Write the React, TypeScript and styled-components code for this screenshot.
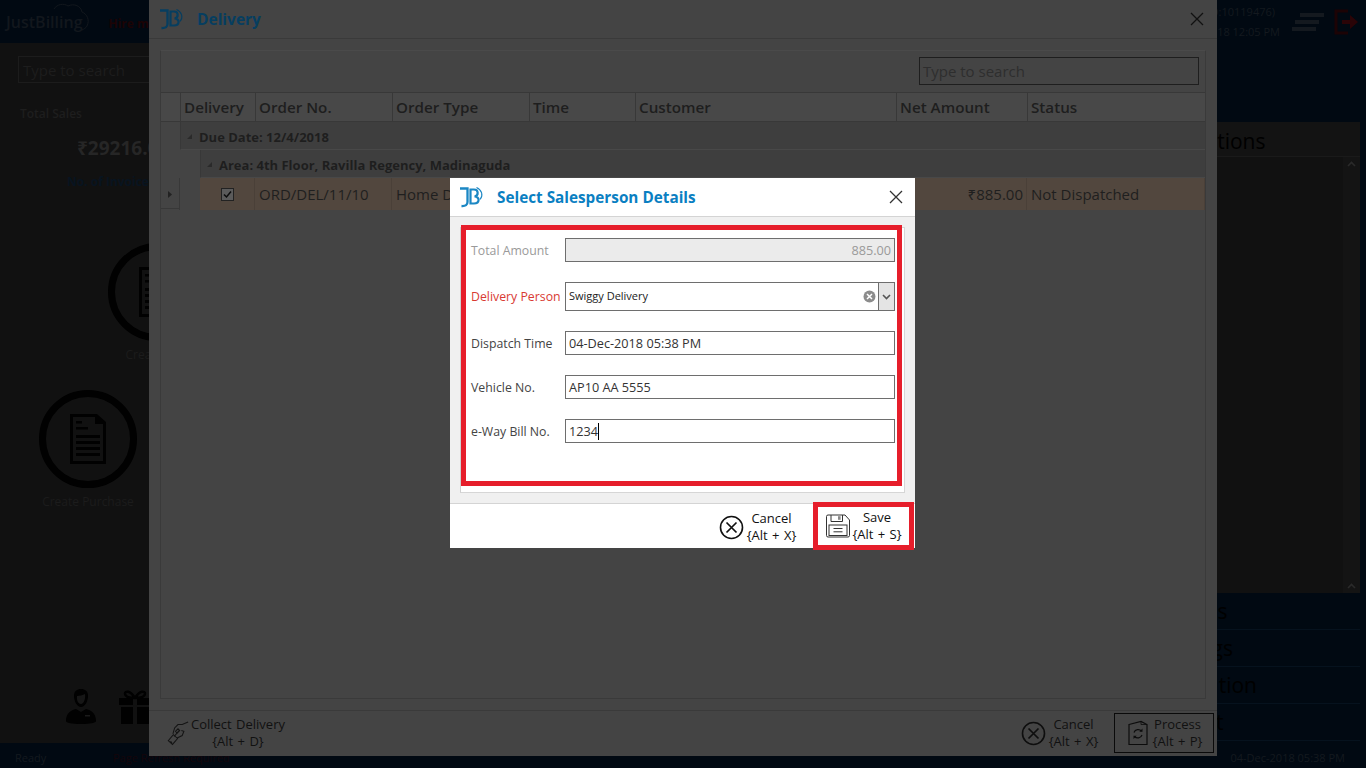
import * as React from "react";
import styled, { createGlobalStyle } from "styled-components";

const GlobalStyle = createGlobalStyle`
  html, body {
    margin: 0;
    padding: 0;
    background: #111;
    overflow: hidden;
  }
  * { box-sizing: border-box; }
`;

const Page = styled.div`
  position: relative;
  width: 1366px;
  height: 768px;
  overflow: hidden;
  display: flex;
  flex-direction: column;
  font-family: "Open Sans", "Noto Sans", sans-serif;
  background: #111;
`;

/* ---- dimmed application behind the dialogs ---- */
const AppHeader = styled.div`
  height: 43px;
  flex: none;
  background: #010912;
  display: flex;
  align-items: center;
  justify-content: space-between;
  padding: 0 8px 0 6px;
`;
const HeaderLeft = styled.div`
  display: flex;
  align-items: center;
  gap: 26px;
`;
const AppLogo = styled.div`
  position: relative;
  color: #12171d;
  font-size: 16px;
  font-weight: 600;
`;
const LogoCloud = styled.svg`
  position: absolute;
  left: 44px;
  top: -8px;
`;
const HireText = styled.div`
  color: #1c0305;
  font-size: 12px;
  font-weight: 700;
  margin-top: 3px;
`;
const HeaderRight = styled.div`
  display: flex;
  align-items: center;
  gap: 10px;
`;
const UserInfo = styled.div`
  color: #14191f;
  font-size: 11px;
  line-height: 20px;
  text-align: right;
  margin-right: 2px;
`;
const UserId = styled.div`
  padding-right: 5px;
`;
const AppBody = styled.div`
  flex: 1;
  display: flex;
  justify-content: space-between;
  min-height: 0;
`;
const LeftPane = styled.div`
  width: 330px;
  padding: 13px 0 0 18px;
  display: flex;
  flex-direction: column;
`;
const AppSearch = styled.div`
  width: 300px;
  height: 27px;
  border: 1px solid #1c1c1c;
  padding-left: 4px;
  color: #1d1d1d;
  font-size: 15px;
  line-height: 27px;
`;
const SalesLabel = styled.div`
  margin: 22px 0 0 2px;
  color: #1e1e1e;
  font-size: 12px;
  font-weight: 600;
`;
const SalesValue = styled.div`
  margin: 13px 0 0 59px;
  color: #262626;
  font-size: 19px;
  font-weight: 700;
`;
const InvoiceLabel = styled.div`
  margin: 12px 0 0 49px;
  color: #081420;
  font-size: 12px;
  font-weight: 700;
`;
const TileRow = styled.div<{ $indent: number; $top: number }>`
  margin: ${(p) => p.$top}px 0 0 ${(p) => p.$indent}px;
  width: 120px;
  display: flex;
  flex-direction: column;
  align-items: center;
`;
const TileCircle = styled.div`
  width: 98px;
  height: 98px;
  border-radius: 50%;
  border: 7px solid #010101;
  display: flex;
  align-items: center;
  justify-content: center;
`;
const TileLabel = styled.div`
  margin-top: 5px;
  color: #1c1c1c;
  font-size: 12px;
  white-space: nowrap;
`;
const BottomIcons = styled.div`
  margin: auto 0 19px 47px;
  display: flex;
  gap: 21px;
  align-items: flex-end;
`;
const RightPane = styled.div`
  width: 180px;
  background: #010912;
  display: flex;
  flex-direction: column;
  padding-top: 79px;
`;
const OptionsPanel = styled.div`
  width: 174px;
  height: 471px;
  background: #111;
  display: flex;
  flex-direction: column;
`;
const OptionsTitle = styled.div`
  height: 35px;
  flex: none;
  border-bottom: 1px solid #1a1a1a;
  background: #131313;
  padding-left: 2px;
  color: #000;
  font-size: 21px;
  line-height: 38px;
`;
const OptionsScroll = styled.div`
  flex: 1;
  width: 17px;
  margin-left: auto;
  background: #141414;
  display: flex;
  flex-direction: column;
  justify-content: space-between;
  align-items: center;
  padding: 4px 0;
`;
const MenuRow = styled.div`
  width: 174px;
  height: 37px;
  border-bottom: 1px solid #06121e;
  padding-left: 2px;
  color: #000;
  font-size: 21px;
  line-height: 37px;
`;
const AppStatus = styled.div`
  height: 25px;
  flex: none;
  background: #010912;
  display: flex;
  align-items: center;
  padding: 4px 21px 0 15px;
  font-size: 11px;
`;
const StatusReady = styled.div`
  color: #14191f;
  width: 98px;
`;
const StatusNote = styled.div`
  color: #14050a;
  font-size: 11px;
`;
const StatusDate = styled.div`
  color: #14191f;
  margin-left: auto;
`;

/* ---- delivery window ---- */
const DeliveryWindow = styled.div`
  position: absolute;
  left: 149px;
  top: 0;
  width: 1068px;
  height: 756px;
  background: #444;
  display: flex;
  flex-direction: column;
`;
const WindowTitleBar = styled.div`
  height: 39px;
  flex: none;
  border-bottom: 1px solid #3a3a3a;
  display: flex;
  align-items: center;
  padding: 0 13px 0 9px;
`;
const WindowTitle = styled.div`
  margin-left: 13px;
  color: #063e60;
  font-size: 15.5px;
  font-weight: 700;
`;
const CloseButton = styled.div`
  margin-left: auto;
  display: flex;
`;
const WindowContent = styled.div`
  flex: 1;
  margin: 11px 11px 11px 11px;
  border: 1px solid #3a3a3a;
  border-top-color: #4a4a4a;
  background: #444;
  display: flex;
  flex-direction: column;
`;
const SearchBar = styled.div`
  height: 41px;
  flex: none;
  display: flex;
  justify-content: flex-end;
  align-items: flex-start;
  padding: 6px 6px 0 0;
`;
const WindowSearch = styled.div`
  width: 280px;
  height: 28px;
  border: 1px solid #1e1e1e;
  padding-left: 3px;
  color: #2e2e2e;
  font-size: 15px;
  line-height: 27px;
`;
const GridHeader = styled.div`
  height: 30px;
  flex: none;
  display: grid;
  grid-template-columns: 19px 75px 137px 137px 106px 261px 131px 1fr;
  border-top: 1px solid #383838;
  border-bottom: 1px solid #383838;
  background: #484848;
`;
const HeaderCell = styled.div`
  border-left: 1px solid #383838;
  padding-left: 3px;
  color: #1e1e1e;
  font-size: 15.2px;
  font-weight: 600;
  line-height: 28px;
  white-space: nowrap;
`;
const GroupRow = styled.div<{ $indent: number; $height: number }>`
  height: ${(p) => p.$height}px;
  flex: none;
  margin-left: ${(p) => p.$indent}px;
  border-left: 1px solid #383838;
  border-bottom: 1px solid #484848;
  background: #3e3e3e;
  display: flex;
  align-items: center;
  gap: 6px;
  padding: 2px 0 0 5px;
  color: #1e1e1e;
  font-size: 13px;
  font-weight: 700;
`;
const DataRow = styled.div`
  height: 31px;
  flex: none;
  display: grid;
  grid-template-columns: 19px 20px 55px 137px 137px 106px 261px 131px 1fr;
  border-bottom: 1px solid #383838;
`;
const RowHeaderCell = styled.div`
  display: flex;
  align-items: center;
  justify-content: center;
  border-right: 1px solid #383838;
`;
const IndentCell = styled.div`
  background: #444;
`;
const DataCell = styled.div<{ $right?: boolean }>`
  background: #52473e;
  border-right: 1px solid #4a4038;
  padding: 0 3px 0 4px;
  color: #1f1f1f;
  font-size: 15px;
  line-height: 32px;
  white-space: nowrap;
  text-align: ${(p) => (p.$right ? "right" : "left")};
`;
const CheckCell = styled(DataCell)`
  display: flex;
  align-items: center;
  justify-content: center;
  padding: 0;
`;
const CheckBox = styled.div`
  width: 13px;
  height: 13px;
  border: 1px solid #222;
  background: #5b5b5b;
  display: flex;
`;
const WindowFooter = styled.div`
  height: 46px;
  flex: none;
  border-top: 1px solid #3a3a3a;
  display: flex;
  align-items: stretch;
  padding: 2px 3px 3px 17px;
`;
const ActionButton = styled.div<{ $boxed?: boolean; $width: number; $padLeft?: number; $padRight?: number }>`
  width: ${(p) => p.$width}px;
  display: flex;
  align-items: center;
  gap: 2px;
  padding: 0 ${(p) => p.$padRight ?? 0}px 0 ${(p) => p.$padLeft ?? 0}px;
  border: ${(p) => (p.$boxed ? "1px solid #0a0a0a" : "1px solid transparent")};
  color: #111;
  font-size: 13px;
  word-spacing: 1px;
  line-height: 17px;
  text-align: center;
`;
const ActionLabel = styled.div`
  flex: 1;
  white-space: nowrap;
`;
const FooterSpacer = styled.div`
  flex: 1;
`;

/* ---- salesperson dialog ---- */
const Dialog = styled.div`
  position: absolute;
  left: 450px;
  top: 178px;
  width: 465px;
  height: 370px;
  background: #fff;
  display: flex;
  flex-direction: column;
`;
const DialogTitleBar = styled.div`
  height: 39px;
  flex: none;
  border-bottom: 1px solid #d4d4d4;
  display: flex;
  align-items: center;
  padding: 0 12px 0 8px;
`;
const DialogTitle = styled.div`
  margin-left: 13px;
  color: #0a7fc2;
  font-size: 15.3px;
  font-weight: 700;
`;
const DialogBody = styled.div`
  height: 286px;
  flex: none;
  background: #f0f0f0;
  padding: 10px 10px 10px 10px;
`;
const FormFrame = styled.div`
  height: 266px;
  background: #fff;
  border: 1px solid #d6d6d6;
  border-left-color: #cfcfcf;
`;
const Highlight = styled.div`
  width: 441px;
  height: 261px;
  margin-top: -3px;
  border: 5px solid #e61e2b;
  background: #fff;
  padding: 8px 1px 0 5px;
  display: flex;
  flex-direction: column;
  gap: 20px;
`;
const FormRow = styled.div`
  display: flex;
  align-items: center;
`;
const FieldLabel = styled.div<{ $tone?: "muted" | "required" }>`
  width: 94px;
  flex: none;
  font-size: 12.3px;
  white-space: nowrap;
  color: ${(p) =>
    p.$tone === "muted" ? "#9a9a9a" : p.$tone === "required" ? "#d93a32" : "#444"};
`;
const Field = styled.div<{ $disabled?: boolean; $right?: boolean; $height?: number }>`
  width: 330px;
  flex: none;
  height: ${(p) => p.$height ?? 24}px;
  border: 1px solid #6e6e6e;
  background: ${(p) => (p.$disabled ? "#ebebeb" : "#fff")};
  color: ${(p) => (p.$disabled ? "#9a9a9a" : "#333")};
  font-size: 12.7px;
  padding: 0 3px;
  display: flex;
  align-items: center;
  justify-content: ${(p) => (p.$right ? "flex-end" : "flex-start")};
  white-space: nowrap;
`;
const Caret = styled.span`
  display: inline-block;
  width: 1px;
  height: 17px;
  background: #000;
`;
const ComboText = styled.div`
  flex: 1;
  font-size: 11px;
  color: #222;
  padding-bottom: 2px;
`;
const ComboClear = styled.div`
  display: flex;
  margin-right: 2px;
`;
const ComboArrow = styled.div`
  width: 17px;
  height: calc(100% + 2px);
  margin: -1px -4px -1px 0;
  border: 1px solid #6e6e6e;
  background: #e4e4e4;
  display: flex;
  align-items: center;
  justify-content: center;
`;
const DialogFooter = styled.div`
  position: relative;
  flex: 1;
  border-top: 1px solid #d4d4d4;
  display: flex;
  justify-content: flex-end;
  padding: 0 1px 0 0;
`;
const DialogActions = styled.div`
  display: flex;
  align-items: center;
  color: #111;
  font-size: 13px;
  word-spacing: 1px;
  line-height: 17px;
  text-align: center;
`;
const CancelAction = styled.div`
  width: 79px;
  margin-right: 15px;
  display: flex;
  align-items: center;
  gap: 1px;
`;
const SaveAction = styled.div`
  width: 101px;
  height: 48px;
  margin-top: -2px;
  border: 5px solid #e61e2b;
  display: flex;
  align-items: center;
  padding: 0 6px 0 7px;
  background: #fff;
`;

const JbLogo = ({ color }: { color: string }) => (
  <svg width="26" height="22" viewBox="0 0 26 22" fill="none">
    <path d="M2 2.500h7.500v13.500c0 2.800-1.800 4.300-6 4" stroke={color} strokeWidth="2.300" />
    <path d="M12.500 3.500h3.500c4.800 0 4.800 6.500 .5 7 5.500 0 5.500 7-.5 7h-3.500z" stroke={color} strokeWidth="2.200" />
    <path d="M18.500 1.500c5.500 2.500 7 8 3.500 12" stroke={color} strokeWidth="1.100" />
  </svg>
);

const CloseIcon = ({ color }: { color: string }) => (
  <svg width="14" height="14" viewBox="0 0 14 14" stroke={color} strokeWidth="1.300" fill="none">
    <path d="M1 1l12 12M13 1L1 13" />
  </svg>
);

const CancelIcon = ({ color }: { color: string }) => (
  <svg width="25" height="25" viewBox="0 0 25 25" fill="none" stroke={color} strokeWidth="1.600">
    <circle cx="12.500" cy="12.500" r="11" />
    <path d="M7.500 7.500l10 10M17.500 7.500l-10 10" strokeWidth="1.700" />
  </svg>
);

const SaveIcon = () => (
  <svg width="26" height="26" viewBox="0 0 26 26" fill="none" stroke="#333" strokeWidth="1">
    <path d="M1.500 3.500a1.500 1.500 0 0 1 1.500-1.500h17l4.500 5v15.500a1.500 1.500 0 0 1-1.500 1.500H3a1.500 1.500 0 0 1-1.500-1.500z" />
    <path d="M6 2v6.500h11.500V2" />
    <rect x="13" y="3.200" width="2.600" height="3.600" fill="#888" stroke="none" />
    <rect x="4" y="12" width="18" height="10.500" />
    <path d="M8.500 15.500h9M8.500 18.800h9" />
  </svg>
);

const ProcessIcon = () => (
  <svg width="20" height="26" viewBox="0 0 20 26" fill="none" stroke="#0c0c0c" strokeWidth="1.200">
    <path d="M1 4.500L13 1.500l6 3V24.500H1z" />
    <path d="M13 1.500v3h6" strokeWidth="0.800" />
    <path d="M6 12.500a4.500 4.500 0 0 1 7.500-1.500M14 15a4.500 4.500 0 0 1-7.500 1.500" />
    <path d="M14.500 8.500v3.200h-3.200zM5.500 19v-3.200h3.200z" fill="#0c0c0c" stroke="none" />
  </svg>
);

const CollectIcon = () => (
  <svg width="26" height="30" viewBox="0 0 26 30" fill="none" stroke="#141414" strokeWidth="1.200">
    <path d="M1.500 24l5 4.500 6-7-5-4.500z" />
    <path d="M4 25l1.800 1.600" strokeWidth="1.600" />
    <path d="M7 16l2-7 4-4h5l7-3" />
    <path d="M12 21l6-3 2-5-3-1" />
    <path d="M10 13l3-3 2 2-3 3z" />
    <path d="M8.500 19l6-7" />
  </svg>
);

const DocumentIcon = () => (
  <svg width="36" height="50" viewBox="0 0 36 50" fill="#010101">
    <path fillRule="evenodd" d="M0 0h27l9 8v42H0zM3 3v44h30V10h-8V3z" />
    <path d="M6 7h6v2.500H6zM6 13h12v2.500H6zM6 21h24v3H6zM6 27h24v3H6zM6 33h24v3H6zM6 39h24v3H6z" />
  </svg>
);

const PersonIcon = () => (
  <svg width="32" height="36" viewBox="0 0 32 36" fill="#010101">
    <path d="M9 8c0-5 3-7 7-7s7 2 7 7c0 5-3 11-7 11S9 13 9 8z" />
    <path d="M12 8c2 0 6-1 8-2 .8 4-1 10-4 10s-4.500-4-4-8z" fill="#161616" />
    <path d="M1 33c0-8 5-11 10-12l5 3 5-3c5 1 10 4 10 12 0 2-6 3-15 3S1 35 1 33z" />
    <path d="M20 27h5v1.500h-5z" fill="#1a1a1a" />
  </svg>
);

const GiftIcon = () => (
  <svg width="34" height="34" viewBox="0 0 34 34" fill="#010101">
    <path d="M1 8h14v7H1zM19 8h14v7H19zM3 17h12v17H3zM19 17h12v17H19z" />
    <path d="M17 8C10 8 7 6 7 3.500S12 0 17 8zM17 8c7 0 10-2 10-4.500S22 0 17 8z" fill="none" stroke="#010101" strokeWidth="2.500" />
  </svg>
);

const MenuIcon = () => (
  <svg width="32" height="18" viewBox="0 0 32 18" fill="#14191f">
    <path d="M8 0h24v4H8zM3 7h24v4H3zM0 14h24v4H0z" />
  </svg>
);

const LogoutIcon = () => (
  <svg width="24" height="26" viewBox="0 0 24 26" fill="none">
    <path d="M14 2H2v22h12" stroke="#1c0305" strokeWidth="3" />
    <path d="M8 11h8V6l8 7-8 7v-5H8z" fill="#2a0407" />
  </svg>
);

const TriangleDown = () => (
  <svg width="7" height="7" viewBox="0 0 7 7" fill="#2a2a2a">
    <path d="M6 1v5H1z" />
  </svg>
);

const TriangleRight = () => (
  <svg width="5" height="7" viewBox="0 0 5 7" fill="#222">
    <path d="M0 0l4 3.500L0 7z" />
  </svg>
);

const Chevron = ({ up }: { up?: boolean }) => (
  <svg width="9" height="6" viewBox="0 0 9 6" fill="none" stroke={up ? "#2a2a2a" : "#555"} strokeWidth="1.600">
    <path d={up ? "M1 5l3.500-3.500L8 5" : "M1 1l3.500 3.500L8 1"} />
  </svg>
);

const columns = ["Delivery", "Order No.", "Order Type", "Time", "Customer", "Net Amount", "Status"];

const App = () => {
  return (
    <Page>
      <GlobalStyle />
      <AppHeader>
        <HeaderLeft>
          <AppLogo>
            JustBilling
            <LogoCloud width="42" height="28" viewBox="0 0 42 28" fill="none" stroke="#12171d" strokeWidth="1">
              <path d="M4 6c3-5 10-6 14-3 6-3 13 0 14 6 5 2 8 8 5 14-1 2-3 3-5 4" />
            </LogoCloud>
          </AppLogo>
          <HireText>Hire me</HireText>
        </HeaderLeft>
        <HeaderRight>
          <UserInfo>
            <UserId>(ID:10119476)</UserId>
            04-Dec-2018 12:05 PM
          </UserInfo>
          <MenuIcon />
          <LogoutIcon />
        </HeaderRight>
      </AppHeader>

      <AppBody>
        <LeftPane>
          <AppSearch>Type to search</AppSearch>
          <SalesLabel>Total Sales</SalesLabel>
          <SalesValue>₹29216.00</SalesValue>
          <InvoiceLabel>No. of Invoices</InvoiceLabel>
          <TileRow $indent={79} $top={53}>
            <TileCircle>
              <DocumentIcon />
            </TileCircle>
            <TileLabel>Create Sale</TileLabel>
          </TileRow>
          <TileRow $indent={10} $top={27}>
            <TileCircle>
              <DocumentIcon />
            </TileCircle>
            <TileLabel>Create Purchase</TileLabel>
          </TileRow>
          <BottomIcons>
            <PersonIcon />
            <GiftIcon />
          </BottomIcons>
        </LeftPane>
        <RightPane>
          <OptionsPanel>
            <OptionsTitle>Options</OptionsTitle>
            <OptionsScroll>
              <Chevron up />
              <Chevron up />
            </OptionsScroll>
          </OptionsPanel>
          <MenuRow>Bills</MenuRow>
          <MenuRow>Logs</MenuRow>
          <MenuRow>Station</MenuRow>
          <MenuRow>Exit</MenuRow>
        </RightPane>
      </AppBody>

      <AppStatus>
        <StatusReady>Ready</StatusReady>
        <StatusNote>Page Refresh Required</StatusNote>
        <StatusDate>04-Dec-2018 05:38 PM</StatusDate>
      </AppStatus>

      <DeliveryWindow>
        <WindowTitleBar>
          <JbLogo color="#063e60" />
          <WindowTitle>Delivery</WindowTitle>
          <CloseButton>
            <CloseIcon color="#111" />
          </CloseButton>
        </WindowTitleBar>
        <WindowContent>
          <SearchBar>
            <WindowSearch>Type to search</WindowSearch>
          </SearchBar>
          <GridHeader>
            <div />
            {columns.map((c) => (
              <HeaderCell key={c}>{c}</HeaderCell>
            ))}
          </GridHeader>
          <GroupRow $indent={19} $height={28}>
            <TriangleDown />
            Due Date: 12/4/2018
          </GroupRow>
          <GroupRow $indent={39} $height={28}>
            <TriangleDown />
            Area: 4th Floor, Ravilla Regency, Madinaguda
          </GroupRow>
          <DataRow>
            <RowHeaderCell>
              <TriangleRight />
            </RowHeaderCell>
            <IndentCell />
            <CheckCell>
              <CheckBox>
                <svg width="11" height="11" viewBox="0 0 11 11" fill="none" stroke="#0d0d0d" strokeWidth="1.500">
                  <path d="M2 5.500l2.500 2.500L9 2.500" />
                </svg>
              </CheckBox>
            </CheckCell>
            <DataCell>ORD/DEL/11/10</DataCell>
            <DataCell>Home Delivery</DataCell>
            <DataCell />
            <DataCell />
            <DataCell $right>₹885.00</DataCell>
            <DataCell>Not Dispatched</DataCell>
          </DataRow>
        </WindowContent>
        <WindowFooter>
          <ActionButton $width={120}>
            <CollectIcon />
            <ActionLabel>
              Collect Delivery
              <br />
              {"{Alt + D}"}
            </ActionLabel>
          </ActionButton>
          <FooterSpacer />
          <ActionButton $width={94} $padRight={14}>
            <CancelIcon color="#0e0e0e" />
            <ActionLabel>
              Cancel
              <br />
              {"{Alt + X}"}
            </ActionLabel>
          </ActionButton>
          <ActionButton $width={100} $boxed $padLeft={13} $padRight={8}>
            <ProcessIcon />
            <ActionLabel>
              Process
              <br />
              {"{Alt + P}"}
            </ActionLabel>
          </ActionButton>
        </WindowFooter>
      </DeliveryWindow>

      <Dialog>
        <DialogTitleBar>
          <JbLogo color="#1b87c4" />
          <DialogTitle>Select Salesperson Details</DialogTitle>
          <CloseButton>
            <CloseIcon color="#333" />
          </CloseButton>
        </DialogTitleBar>
        <DialogBody>
          <FormFrame>
            <Highlight>
              <FormRow>
                <FieldLabel $tone="muted">Total Amount</FieldLabel>
                <Field $disabled $right>885.00</Field>
              </FormRow>
              <FormRow>
                <FieldLabel $tone="required">Delivery Person</FieldLabel>
                <Field $height={29}>
                  <ComboText>Swiggy Delivery</ComboText>
                  <ComboClear>
                    <svg width="13" height="13" viewBox="0 0 13 13">
                      <circle cx="6.500" cy="6.500" r="6" fill="#8c8c8c" />
                      <path d="M4 4l5 5M9 4l-5 5" stroke="#fff" strokeWidth="1.500" />
                    </svg>
                  </ComboClear>
                  <ComboArrow>
                    <Chevron />
                  </ComboArrow>
                </Field>
              </FormRow>
              <FormRow>
                <FieldLabel>Dispatch Time</FieldLabel>
                <Field>04-Dec-2018 05:38 PM</Field>
              </FormRow>
              <FormRow>
                <FieldLabel>Vehicle No.</FieldLabel>
                <Field>AP10 AA 5555</Field>
              </FormRow>
              <FormRow>
                <FieldLabel>e-Way Bill No.</FieldLabel>
                <Field>
                  1234
                  <Caret />
                </Field>
              </FormRow>
            </Highlight>
          </FormFrame>
        </DialogBody>
        <DialogFooter>
          <DialogActions>
            <CancelAction>
              <CancelIcon color="#111" />
              <ActionLabel>
                Cancel
                <br />
                {"{Alt + X}"}
              </ActionLabel>
            </CancelAction>
            <SaveAction>
              <SaveIcon />
              <ActionLabel>
                Save
                <br />
                {"{Alt + S}"}
              </ActionLabel>
            </SaveAction>
          </DialogActions>
        </DialogFooter>
      </Dialog>
    </Page>
  );
};

export default App;
